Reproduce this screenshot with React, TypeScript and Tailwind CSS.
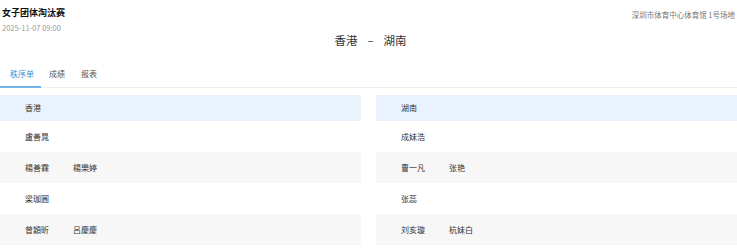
const ROWS = [
  { left: ['盧善晁'], right: ['成妹浩'] },
  { left: ['楊善霖', '楊樂婷'], right: ['曹一凡', '张艳'] },
  { left: ['梁珈圓'], right: ['张蕊'] },
  { left: ['曾穎昕', '呂慶慶'], right: ['刘亥璇', '杭妹白'] },
]

const TABS = ['秩序单', '成绩', '报表']

function Cell({ names, shaded }: { names: string[]; shaded: boolean }) {
  return (
    <div className={`h-[31px] flex items-center pl-[25px] text-[8px] text-[#333] ${shaded ? 'bg-[#f7f7f7]' : 'bg-white'}`}>
      {names.map((n, i) => (
        <span key={i} className="w-[48px]">{n}</span>
      ))}
    </div>
  )
}

export default function App() {
  return (
    <div
      className="w-[737px] h-[251px] bg-white overflow-hidden"
      style={{ fontFamily: '"Noto Sans CJK SC", "Noto Sans", sans-serif' }}
    >
      {/* Header */}
      <div className="flex justify-between pl-[2px] pr-[2px] pt-[5px]">
        <div>
          <p className="text-[9px] font-bold text-[#111] leading-[16px]">女子团体淘汰赛</p>
          <p className="text-[7.5px] text-[#999] leading-[12px] mt-[1px]">2025-11-07 09:00</p>
        </div>
        <p className="text-[7.5px] text-[#777] leading-[14px] mt-[3px]">深圳市体育中心体育馆 1号场地</p>
      </div>
      <div className="flex justify-center items-center gap-[10px] text-[11.5px] text-[#333] leading-[16px] -mt-[2px] pl-[4px]">
        <span>香港</span>
        <span>–</span>
        <span>湖南</span>
      </div>

      {/* Tabs */}
      <div className="flex mt-[19px] border-b border-[#eee]">
        {TABS.map((t, i) => (
          <div
            key={t}
            className={`text-[8px] leading-[14px] pb-[5px] ${i === 0 ? 'w-[41px] pl-[10px] text-[#3d8fd8] border-b-2 border-[#74b4ea] -mb-[1px]' : 'text-[#555] pl-[8px] pr-[8px]'}`}
          >
            {t}
          </div>
        ))}
      </div>

      {/* Lineups */}
      <div className="grid grid-cols-2 gap-x-[15px] mt-[7px]">
        <div>
          <div className="h-[26px] flex items-center pl-[25px] text-[8px] text-[#333] bg-[#eaf3fd]">香港</div>
          {ROWS.map((r, i) => (
            <Cell key={i} names={r.left} shaded={i % 2 === 1} />
          ))}
        </div>
        <div>
          <div className="h-[26px] flex items-center pl-[25px] text-[8px] text-[#333] bg-[#eaf3fd]">湖南</div>
          {ROWS.map((r, i) => (
            <Cell key={i} names={r.right} shaded={i % 2 === 1} />
          ))}
        </div>
      </div>
    </div>
  )
}
